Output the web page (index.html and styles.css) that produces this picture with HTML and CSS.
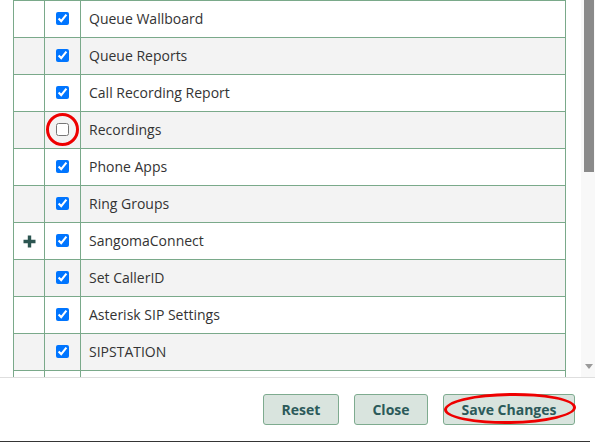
FILE: index.html
```html
<!DOCTYPE html>
<html lang="en">
<head>
<meta charset="utf-8">
<title>Module Permissions</title>
<link rel="stylesheet" href="styles.css">
</head>
<body>
<div class="modal">
  <div class="scroll-area">
    <div class="grid">
      <div class="row"><div class="cell c-icon"></div><div class="cell c-check"><input type="checkbox" checked></div><div class="cell c-name">Queue Wallboard</div></div>
      <div class="row alt"><div class="cell c-icon"></div><div class="cell c-check"><input type="checkbox" checked></div><div class="cell c-name">Queue Reports</div></div>
      <div class="row"><div class="cell c-icon"></div><div class="cell c-check"><input type="checkbox" checked></div><div class="cell c-name">Call Recording Report</div></div>
      <div class="row alt"><div class="cell c-icon"></div><div class="cell c-check marked"><input type="checkbox"><span class="ring"></span></div><div class="cell c-name">Recordings</div></div>
      <div class="row"><div class="cell c-icon"></div><div class="cell c-check"><input type="checkbox" checked></div><div class="cell c-name">Phone Apps</div></div>
      <div class="row alt"><div class="cell c-icon"></div><div class="cell c-check"><input type="checkbox" checked></div><div class="cell c-name">Ring Groups</div></div>
      <div class="row"><div class="cell c-icon"><svg class="plus" width="13" height="13" viewBox="0 0 13 13"><path d="M6.5 0.5v12M0.5 6.5h12" stroke="#2c5551" stroke-width="3.4"/></svg></div><div class="cell c-check"><input type="checkbox" checked></div><div class="cell c-name">SangomaConnect</div></div>
      <div class="row alt"><div class="cell c-icon"></div><div class="cell c-check"><input type="checkbox" checked></div><div class="cell c-name">Set CallerID</div></div>
      <div class="row"><div class="cell c-icon"></div><div class="cell c-check"><input type="checkbox" checked></div><div class="cell c-name">Asterisk SIP Settings</div></div>
      <div class="row alt"><div class="cell c-icon"></div><div class="cell c-check"><input type="checkbox" checked></div><div class="cell c-name">SIPSTATION</div></div>
      <div class="row"><div class="cell c-icon"></div><div class="cell c-check"></div><div class="cell c-name"></div></div>
    </div>
    <div class="spacer"></div>
    <div class="scrollbar">
      <div class="thumb"></div>
      <div class="track-fill"></div>
      <div class="arrow"></div>
    </div>
  </div>
  <div class="footer">
    <button class="btn btn-reset">Reset</button>
    <button class="btn btn-close">Close</button>
    <button class="btn btn-save">Save Changes<span class="oval"></span></button>
  </div>
  <div class="edge"></div>
</div>
</body>
</html>
```

FILE: styles.css
```css
* { box-sizing: border-box; }
html, body {
  margin: 0;
  padding: 0;
  background: #ffffff;
}
body {
  width: 595px;
  height: 442px;
  overflow: hidden;
  font-family: "Open Sans", "Noto Sans", sans-serif;
  font-size: 14px;
  color: #333333;
}
.modal {
  display: flex;
  flex-direction: column;
  width: 595px;
  height: 442px;
}
.scroll-area {
  display: flex;
  height: 377px;
  overflow: hidden;
}
.grid {
  margin-left: 13px;
  width: 553px;
  border-top: 1px solid #7aa98a;
  border-left: 1px solid #7aa98a;
  border-right: 1px solid #7aa98a;
  align-self: flex-start;
}
.row {
  display: grid;
  grid-template-columns: 31px 36px 1fr;
  height: 37px;
  border-bottom: 1px solid #7aa98a;
  background: #ffffff;
}
.row.alt { background: #f3f3f3; }
.cell {
  display: flex;
  align-items: center;
  border-right: 1px solid #7aa98a;
}
.cell.c-name {
  border-right: 0;
  padding-left: 8px;
  padding-bottom: 2px;
}
.c-icon { justify-content: center; padding-left: 1px; padding-top: 1px; }
.c-check { justify-content: center; padding-bottom: 2px; }
.c-check input {
  width: 13px;
  height: 13px;
  margin: 0;
}
.marked { position: relative; }
.ring {
  position: absolute;
  left: 1px;
  top: 1px;
  width: 33px;
  height: 33px;
  border: 3px solid #ee0000;
  border-radius: 50%;
  pointer-events: none;
}
.spacer { flex: 1; }
.scrollbar {
  width: 14px;
  display: flex;
  flex-direction: column;
  background: #f8f8f8;
}
.thumb {
  margin-left: 3px;
  width: 10px;
  height: 172px;
  background: #8a8a8a;
}
.track-fill { flex: 1; }
.arrow {
  align-self: center;
  margin-left: 1px;
  margin-bottom: 8px;
  width: 0;
  height: 0;
  border-left: 4px solid transparent;
  border-right: 4px solid transparent;
  border-top: 5px solid #9a9a9a;
}
.footer {
  display: flex;
  justify-content: flex-end;
  gap: 15px;
  border-top: 1px solid #dedede;
  padding: 16px 20px 16px 0;
  height: 64px;
}
.btn {
  position: relative;
  height: 31px;
  padding: 0;
  font-family: "Open Sans", "Noto Sans", sans-serif;
  font-size: 14px;
  font-weight: 700;
  color: #2c5a5a;
  background: #d9e4de;
  border: 1px solid #7eab8f;
  border-radius: 3px;
}
.btn-reset { width: 76px; }
.btn-close { width: 74px; }
.btn-save { width: 132px; }
.oval {
  position: absolute;
  left: 0;
  top: -2px;
  width: 132px;
  height: 31px;
  border: 3px solid #ee0000;
  border-radius: 50%;
  transform: rotate(-1deg);
  pointer-events: none;
}
.edge {
  height: 1px;
  margin-right: 5px;
  background: #353535;
}
```
